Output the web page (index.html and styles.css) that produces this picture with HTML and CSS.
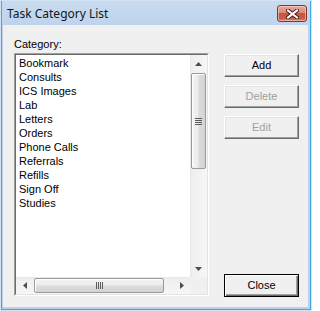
FILE: index.html
```html
<!DOCTYPE html>
<html>
<head>
<meta charset="utf-8">
<title>Task Category List</title>
<link rel="stylesheet" href="styles.css">
</head>
<body>
<div class="window">
  <div class="frame">
    <div class="titlebar">
      <span class="title">Task Category List</span>
      <div class="close-x">
        <svg width="13" height="10" viewBox="0 0 13 10">
          <path d="M2 1.5 L11 8.5 M11 1.5 L2 8.5" stroke="#4a1c16" stroke-width="4" stroke-linecap="square" fill="none"/>
          <path d="M2 1.5 L11 8.5 M11 1.5 L2 8.5" stroke="#ffffff" stroke-width="2" stroke-linecap="square" fill="none"/>
        </svg>
      </div>
    </div>
    <div class="client">
      <div class="left-col">
        <div class="label">Category:</div>
        <div class="listbox">
          <div class="listbox-inner">
            <div class="items">
              <div class="item">Bookmark</div>
              <div class="item">Consults</div>
              <div class="item">ICS Images</div>
              <div class="item">Lab</div>
              <div class="item">Letters</div>
              <div class="item">Orders</div>
              <div class="item">Phone Calls</div>
              <div class="item">Referrals</div>
              <div class="item">Refills</div>
              <div class="item">Sign Off</div>
              <div class="item">Studies</div>
            </div>
            <div class="vscroll">
              <div class="sb-btn">
                <svg width="7" height="4" viewBox="0 0 7 4"><polygon points="0,4 7,4 3.5,0" fill="#4d4d4d"/></svg>
              </div>
              <div class="vtrack">
                <div class="vthumb">
                  <svg width="7" height="7" viewBox="0 0 7 7"><path d="M0 0.5H7M0 2.5H7M0 4.5H7M0 6.5H7" stroke="#5a5a5a" stroke-width="1"/></svg>
                </div>
              </div>
              <div class="sb-btn">
                <svg width="7" height="4" viewBox="0 0 7 4"><polygon points="0,0 7,0 3.5,4" fill="#4d4d4d"/></svg>
              </div>
            </div>
            <div class="hscroll">
              <div class="sb-btn">
                <svg width="4" height="7" viewBox="0 0 4 7"><polygon points="4,0 4,7 0,3.5" fill="#4d4d4d"/></svg>
              </div>
              <div class="htrack">
                <div class="hthumb">
                  <svg width="7" height="7" viewBox="0 0 7 7"><path d="M0.5 0V7M2.5 0V7M4.5 0V7M6.5 0V7" stroke="#5a5a5a" stroke-width="1"/></svg>
                </div>
              </div>
              <div class="sb-btn">
                <svg width="4" height="7" viewBox="0 0 4 7"><polygon points="0,0 0,7 4,3.5" fill="#4d4d4d"/></svg>
              </div>
            </div>
            <div class="corner"></div>
          </div>
        </div>
      </div>
      <div class="right-col">
        <div class="btn">Add</div>
        <div class="btn disabled">Delete</div>
        <div class="btn disabled">Edit</div>
        <div class="btn default">Close</div>
      </div>
    </div>
  </div>
</div>
</body>
</html>
```
FILE: styles.css
```css
* { box-sizing: border-box; }
html, body { margin: 0; padding: 0; background: #ffffff; }
body { font-family: "Liberation Sans", Arial, sans-serif; font-size: 11px; color: #000; }

.window {
  width: 312px;
  height: 311px;
  border: 1px solid #d3e2f2;
  background: #bcd3eb;
}
.frame {
  height: 100%;
  display: flex;
  flex-direction: column;
  border: 1px solid #40a9e3;
  border-top: 0;
  background: linear-gradient(to bottom, #c9dbef 0, #bed4ec 24px, #bad1ea 100%);
}
.titlebar {
  height: 24px;
  flex: none;
  display: flex;
  align-items: flex-start;
  justify-content: space-between;
}
.title {
  font-family: "Noto Sans", "Open Sans", sans-serif;
  font-size: 12px;
  line-height: 16px;
  padding: 5px 0 0 5px;
  color: #101820;
}
.close-x {
  width: 30px;
  height: 17px;
  margin: 4px 3px 0 0;
  border: 1px solid #80342a;
  border-radius: 3px;
  background: linear-gradient(to bottom, #e9a99f 0, #dc8778 45%, #c95441 50%, #c85a46 80%, #d9826f 100%);
  box-shadow: inset 0 0 0 1px rgba(255, 220, 210, 0.55);
  display: flex;
  align-items: center;
  justify-content: center;
}
.client {
  flex: 1;
  margin: 0 2px 2px 1px;
  background: #f0f0f0;
  display: flex;
  padding: 13px 0 0 11px;
}
.left-col {
  width: 195px;
  display: flex;
  flex-direction: column;
}
.label {
  height: 13px;
  line-height: 13px;
  margin-bottom: 2px;
}
.listbox {
  width: 195px;
  height: 243px;
  border: 1px solid;
  border-color: #a0a0a0 #ffffff #ffffff #a0a0a0;
}
.listbox-inner {
  height: 100%;
  border: 1px solid;
  border-color: #696969 #e3e3e3 #e3e3e3 #696969;
  background: #ffffff;
  display: grid;
  grid-template-columns: 1fr 17px;
  grid-template-rows: 1fr 17px;
}
.items {
  padding: 1px 0 0 3px;
  overflow: hidden;
}
.item {
  height: 14px;
  line-height: 14px;
  white-space: nowrap;
}
.vscroll {
  display: flex;
  flex-direction: column;
  background: linear-gradient(to right, #e6e6e6 0, #efefef 2px, #f6f6f6 100%);
}
.hscroll {
  display: flex;
  background: linear-gradient(to bottom, #e6e6e6 0, #efefef 2px, #f6f6f6 100%);
}
.sb-btn {
  width: 17px;
  height: 17px;
  flex: none;
  display: flex;
  align-items: center;
  justify-content: center;
}
.vtrack {
  flex: 1;
  padding: 1px 1px 0 1px;
}
.vthumb {
  height: 96px;
  border: 1px solid #9a9a9a;
  border-radius: 2px;
  background: linear-gradient(to right, #f4f4f4 0, #ececec 45%, #dcdcdc 55%, #d3d3d3 100%);
  box-shadow: inset 1px 1px 0 #ffffff;
  display: flex;
  align-items: center;
  justify-content: center;
}
.htrack {
  flex: 1;
  padding: 1px 0 1px 1px;
}
.hthumb {
  width: 130px;
  height: 100%;
  border: 1px solid #9a9a9a;
  border-radius: 2px;
  background: linear-gradient(to bottom, #f4f4f4 0, #ececec 45%, #dcdcdc 55%, #d3d3d3 100%);
  box-shadow: inset 1px 1px 0 #ffffff;
  display: flex;
  align-items: center;
  justify-content: center;
}
.corner {
  background: #f0f0f0;
}
.right-col {
  width: 75px;
  margin-left: 15px;
  display: flex;
  flex-direction: column;
  gap: 8px;
  padding: 16px 0 10px 0;
}
.btn {
  height: 23px;
  line-height: 21px;
  text-align: center;
  background: #f0f0f0;
  border: 1px solid;
  border-color: #ffffff #696969 #696969 #ffffff;
  box-shadow: inset -1px -1px 0 #a0a0a0, inset 1px 1px 0 #e3e3e3;
}
.btn.disabled {
  color: #a0a0a0;
}
.btn.default {
  margin-top: auto;
  border: 1px solid #000000;
  box-shadow: inset 1px 1px 0 #ffffff, inset -1px -1px 0 #696969, inset -2px -2px 0 #a0a0a0;
}
```
